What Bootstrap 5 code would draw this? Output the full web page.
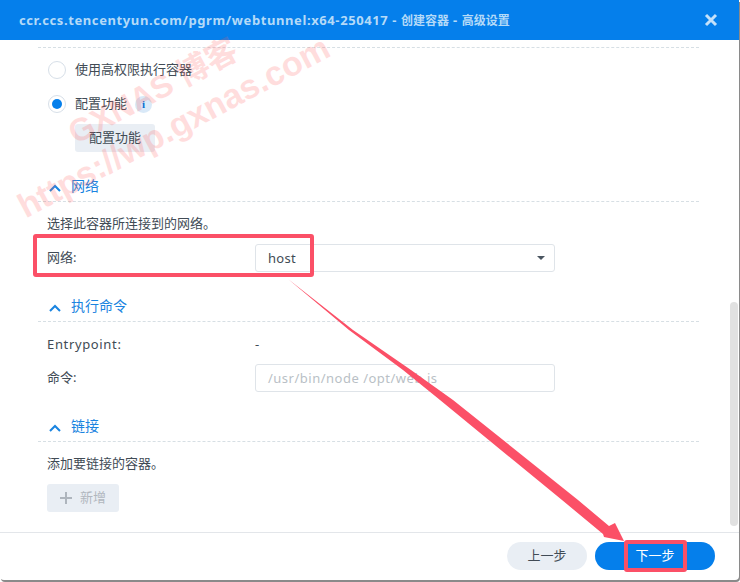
<!DOCTYPE html>
<html lang="zh">
<head>
<meta charset="utf-8">
<title>高级设置</title>
<link href="https://cdn.jsdelivr.net/npm/bootstrap@5.3.0/dist/css/bootstrap.min.css" rel="stylesheet">
<style>
html,body{margin:0;height:100%;background:#fff;overflow:hidden}
body{font-family:"Noto Sans","Noto Sans CJK SC",sans-serif;font-size:13px;color:#414b55;line-height:20px}
.dlg{position:relative;width:739px;height:580px;background:#fff;box-shadow:1px 2px 0 #8a8a8a;border-radius:0 0 4px 4px;overflow:hidden}
.dlg-head{height:40px;background:#057feb;padding:0 19px;color:#b4daf8;font-weight:700;font-size:13px}
.head-lat{letter-spacing:.6px}
.head-cjk{font-size:12px}
.dlg-x{width:14px;height:14px;margin-right:2px}
.dlg-body{height:492px;position:relative;padding:7px 40px 0 38px}
.topline{border-top:1px dashed #d7dfe4;height:1px;margin-bottom:5px}
.pad{padding-left:9px;line-height:14px;margin:14px 0 14px}
.radio-row{height:34px;padding-left:10px;gap:9px}
.radio-mark{width:18px;height:18px;border-radius:50%;border:1px solid #d7dfe8;background:#fff;flex:none;display:flex;align-items:center;justify-content:center}
.radio-mark.on::after{content:"";width:10px;height:10px;border-radius:50%;background:#057feb}
.tx{padding-bottom:2px}
.info-dot{width:17px;height:17px;border-radius:50%;background:#d9e9f8;margin-left:-1px;color:#0a6fd0;font:700 11px/17px "Liberation Serif",serif;text-align:center}
.soft-btn{background:#e9eef4;border-radius:3px;height:28px;line-height:26px;text-align:center;color:#414b55}
.cfg-btn{width:80px;margin:3px 0 0 37px}
.sec-title{height:28px;padding-left:11px;gap:10px;color:#1a84e0;font-size:14px;border-bottom:1px dashed #d7dfe4;margin-top:22px}
.sec-title .tx{padding-bottom:3px}
.chev{width:12px;height:8px;flex:none}
.form-line{padding-left:9px;height:28px}
.gap-entry{margin-top:8px}
.gap-cmd{margin-top:6px}
.form-key{width:208px;flex:none}
.lat-key{letter-spacing:.65px}
.field{width:300px;height:28px;border:1px solid #dfe4e9;border-radius:3px;padding:0 12px;color:#414b55;letter-spacing:.3px}
.field.ph{color:#b9bfc6;letter-spacing:.5px}
.caret-down{width:0;height:0;border-left:4px solid transparent;border-right:4px solid transparent;border-top:4px solid #4a5560;margin-right:-3px}
.add-btn{width:72px;margin-left:9px;color:#b1b7be;gap:8px}
.plus{width:12px;height:12px}
.dlg-foot{height:48px;border-top:1px solid #e3e6ea;padding:9px 24px 0 0;gap:8px}
.pill-a{width:80px;height:28px;border-radius:14px;background:#e9eef4;line-height:26px;text-align:center;color:#414b55}
.pill-b{width:120px;height:28px;border-radius:14px;background:#057feb;line-height:26px;text-align:center;color:#fff}
.sbar{position:absolute;right:1px;top:262px;width:8px;height:224px;border-radius:4px;background:#e1e1e1}
.mk{position:absolute;font-family:"Liberation Sans","Noto Sans CJK SC",sans-serif;font-weight:700;color:#ff5a5a;opacity:.2;transform-origin:0 100%;white-space:nowrap;pointer-events:none;line-height:1}
.mk-a{left:78px;top:117px;font-size:32px;transform:rotate(-28deg)}
.mk-b{left:28px;top:189px;font-size:34px;transform:rotate(-28deg)}
.hl{position:absolute;border:4px solid #fb5067;border-radius:3px;pointer-events:none}
.hl-a{left:33px;top:234px;width:281px;height:43px}
.hl-b{left:624px;top:540px;width:63px;height:32px}
.arrow{position:absolute;left:0;top:0;pointer-events:none}
</style>
</head>
<body>
<div class="dlg">
  <div class="dlg-head d-flex align-items-center justify-content-between">
    <span><span class="head-lat">ccr.ccs.tencentyun.com/pgrm/webtunnel:x64-250417 - </span><span class="head-cjk">创建容器</span><span class="head-lat"> - </span><span class="head-cjk">高级设置</span></span>
    <svg class="dlg-x" viewBox="0 0 14 14"><path d="M2 2l10 10M12 2L2 12" stroke="#c4e1fa" stroke-width="3" fill="none"/></svg>
  </div>
  <div class="dlg-body">
    <div class="topline"></div>
    <div class="radio-row d-flex align-items-center"><span class="radio-mark"></span><span class="tx">使用高权限执行容器</span></div>
    <div class="radio-row d-flex align-items-center"><span class="radio-mark on"></span><span class="tx">配置功能</span><span class="info-dot">i</span></div>
    <div class="soft-btn cfg-btn">配置功能</div>

    <div class="sec-title d-flex align-items-center"><svg class="chev" viewBox="0 0 12 8"><path d="M1 7l5-5 5 5" stroke="#1a84e0" stroke-width="2" fill="none"/></svg><span class="tx">网络</span></div>
    <div class="pad">选择此容器所连接到的网络。</div>
    <div class="form-line d-flex align-items-center"><span class="form-key tx">网络:</span>
      <div class="field d-flex align-items-center justify-content-between"><span>host</span><span class="caret-down"></span></div></div>

    <div class="sec-title d-flex align-items-center"><svg class="chev" viewBox="0 0 12 8"><path d="M1 7l5-5 5 5" stroke="#1a84e0" stroke-width="2" fill="none"/></svg><span class="tx">执行命令</span></div>
    <div class="form-line gap-entry d-flex align-items-center"><span class="form-key lat-key">Entrypoint:</span><span>-</span></div>
    <div class="form-line gap-cmd d-flex align-items-center"><span class="form-key tx">命令:</span><div class="field ph d-flex align-items-center">/usr/bin/node /opt/web.js</div></div>

    <div class="sec-title d-flex align-items-center"><svg class="chev" viewBox="0 0 12 8"><path d="M1 7l5-5 5 5" stroke="#1a84e0" stroke-width="2" fill="none"/></svg><span class="tx">链接</span></div>
    <div class="pad">添加要链接的容器。</div>
    <div class="soft-btn add-btn d-flex align-items-center justify-content-center"><svg class="plus" viewBox="0 0 12 12"><path d="M6 0v12M0 6h12" stroke="#aeb5bd" stroke-width="2"/></svg><span class="tx">新增</span></div>
    <div class="sbar"></div>
  </div>
  <div class="dlg-foot d-flex justify-content-end">
    <div class="pill-a">上一步</div>
    <div class="pill-b">下一步</div>
  </div>
  <div class="mk mk-a">GXNAS 博客</div>
  <div class="mk mk-b">https://wp.gxnas.com</div>
  <svg class="arrow" width="740" height="582" viewBox="0 0 740 582"><path d="M288 279L353 330 411 370 453 400 578 500 609 526 615 523 624 541 604 537 603 534 562 500 440 400 403 370 349 330z" fill="#fb5067"/></svg>
  <div class="hl hl-a"></div>
  <div class="hl hl-b"></div>
</div>
</body>
</html>
